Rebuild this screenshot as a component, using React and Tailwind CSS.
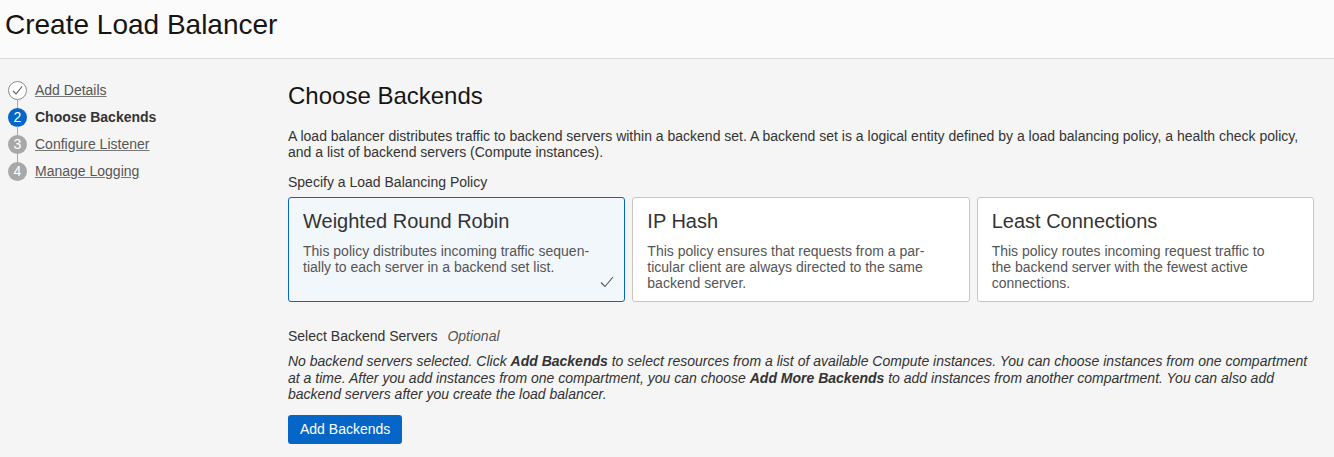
import React from "react";

const steps = [
  { n: 1, label: "Add Details", state: "done" },
  { n: 2, label: "Choose Backends", state: "current" },
  { n: 3, label: "Configure Listener", state: "todo" },
  { n: 4, label: "Manage Logging", state: "todo" },
];

const policies = [
  {
    title: "Weighted Round Robin",
    desc: "This policy distributes incoming traffic sequen\u00ADtially to each server in a backend set list.",
    selected: true,
  },
  {
    title: "IP Hash",
    desc: "This policy ensures that requests from a par\u00ADticular client are always directed to the same backend server.",
  },
  {
    title: "Least Connections",
    desc: "This policy routes incoming request traffic to the backend server with the fewest active connections.",
  },
];

const StepDot = ({ n, state }) => {
  if (state === "done") {
    return (
      <div className="w-[19px] h-[19px] rounded-full border border-[#8a8a8a] bg-white flex items-center justify-center">
        <svg width="13" height="13" viewBox="0 0 13 13" fill="none">
          <path d="M2 6.8 L5 10 L11 2.5" stroke="#555" strokeWidth="1.1" />
        </svg>
      </div>
    );
  }
  return (
    <div
      className={`w-[19px] h-[19px] rounded-full flex items-center justify-center text-[14px] text-white ${
        state === "current" ? "bg-[#0566c8]" : "bg-[#a8a8a8]"
      }`}
    >
      {n}
    </div>
  );
};

export default function App() {
  return (
    <div
      className="min-h-[457px] bg-[#f5f5f5] text-[#333] overflow-hidden"
      style={{ fontFamily: '"Liberation Sans", Arial, sans-serif' }}
    >
      {/* header */}
      <div className="h-[59px] bg-[#fbfbfb] border-b border-[#dcdcdc] px-[5px] pt-[8px]">
        <h1 className="text-[28px] leading-[34px] text-[#161513]">Create Load Balancer</h1>
      </div>

      <div className="flex">
        {/* steps */}
        <div className="w-[288px] shrink-0 pt-[18px] pl-[8px]">
          {steps.map((s, i) => (
            <div key={s.n} className="flex items-center h-[27px] relative">
              {i < steps.length - 1 && (
                <div className="absolute left-[9px] top-[22px] h-[10px] w-px bg-[#a8a8a8]" />
              )}
              <StepDot n={s.n} state={s.state} />
              <span
                className={`ml-[8px] text-[14px] ${
                  s.state === "current"
                    ? "font-bold text-[#333]"
                    : "underline text-[#555] decoration-[#777]"
                }`}
              >
                {s.label}
              </span>
            </div>
          ))}
        </div>

        {/* main */}
        <div className="flex-1 pr-[18px] pt-[23px]">
          <h2 className="text-[24px] leading-[28px] text-[#161513]">Choose Backends</h2>
          <p className="mt-[18px] text-[14px] leading-[16px] text-[#333]">
            A load balancer distributes traffic to backend servers within a backend set. A backend set is a logical entity defined by a load balancing policy, a health check policy, and a list of backend servers (Compute instances).
          </p>
          <div className="mt-[14px] text-[14px] leading-[16px] text-[#333]">
            Specify a Load Balancing Policy
          </div>
          <div className="mt-[7px] grid grid-cols-3 gap-[7px] pr-[2px]">
            {policies.map((p) => (
              <div
                key={p.title}
                className={`relative h-[105px] rounded-[3px] border px-[14px] pt-[10px] ${
                  p.selected ? "bg-[#f2f7fc] border-[#0566c8]" : "bg-white border-[#c6c6c6]"
                }`}
              >
                <div className="text-[20px] leading-[26px] text-[#333]">{p.title}</div>
                <p className="mt-[9px] max-w-[292px] text-[14px] leading-[16px] text-[#555]">{p.desc}</p>
                {p.selected && (
                  <svg
                    className="absolute right-[10px] bottom-[13px]"
                    width="14"
                    height="12"
                    viewBox="0 0 14 12"
                    fill="none"
                  >
                    <path d="M1 6.5 L5 10.5 L13 1" stroke="#555" strokeWidth="1.1" />
                  </svg>
                )}
              </div>
            ))}
          </div>

          <div className="mt-[26px] text-[14px] leading-[16px] text-[#333]">
            Select Backend Servers
            <span className="ml-[10px] italic text-[#555]">Optional</span>
          </div>
          <p className="mt-[9px] text-[14px] leading-[16.5px] italic text-[#333]">
            No backend servers selected. Click <b>Add Backends</b> to select resources from a list of available Compute instances. You can choose instances from one compartment at a time. After you add instances from one compartment, you can choose <b>Add More Backends</b> to add instances from another compartment. You can also add backend servers after you create the load balancer.
          </p>
          <button className="mt-[12px] h-[29px] px-[12px] rounded-[3px] bg-[#0566c8] text-white text-[14px]">
            Add Backends
          </button>
        </div>
      </div>
    </div>
  );
}
